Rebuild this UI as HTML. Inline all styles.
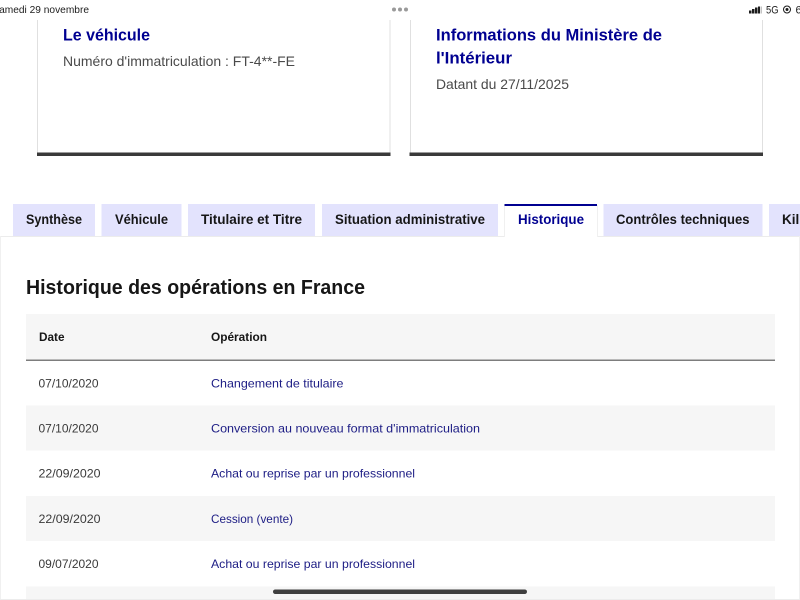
<!DOCTYPE html>
<html lang="fr">
<head>
<meta charset="utf-8">
<title>Historique</title>
<style>
html,body{margin:0;padding:0;background:#fff;width:800px;height:600px;overflow:hidden}
svg{display:block;position:absolute;left:0;top:0}
text{font-family:"Liberation Sans",sans-serif}
.b{font-weight:bold}
.h{fill:#000091;font-size:17px;font-weight:bold}
.p{fill:#4a4a4a;font-size:14px}
.t{fill:#161616;font-size:13.5px;font-weight:bold}
.d{fill:#3a3a3a;font-size:12px}
.l{fill:#1c1c84;font-size:12px}
.s{fill:#1c1c1c;font-size:10.5px}
</style>
</head>
<body>
<svg width="800" height="600" viewBox="0 0 800 600" xmlns="http://www.w3.org/2000/svg">
<rect width="800" height="600" fill="#fff"/>

<!-- status bar -->
<text class="s" x="-6" y="13" textLength="95" lengthAdjust="spacingAndGlyphs">samedi 29 novembre</text>
<circle cx="394" cy="9.5" r="2" fill="#9a9a9a"/>
<circle cx="400" cy="9.5" r="2" fill="#9a9a9a"/>
<circle cx="406" cy="9.5" r="2" fill="#9a9a9a"/>
<rect x="749" y="10.500" width="2.500" height="3" fill="#1c1c1c"/>
<rect x="752" y="9" width="2.500" height="4.500" fill="#1c1c1c"/>
<rect x="755" y="7.500" width="2.500" height="6" fill="#1c1c1c"/>
<rect x="758" y="6.500" width="2" height="7" fill="#1c1c1c"/>
<rect x="760.500" y="6.500" width="1.500" height="7" fill="#c4c4c4"/>
<text class="s" x="766" y="13.500" font-size="11" style="font-size:11px" textLength="12.500" lengthAdjust="spacingAndGlyphs">5G</text>
<circle cx="787" cy="9.500" r="3.500" fill="none" stroke="#1c1c1c" stroke-width="1"/>
<circle cx="787" cy="9.500" r="1.500" fill="#1c1c1c"/>
<text class="s" x="795.500" y="13.500" style="font-size:11px">6</text>

<!-- cards -->
<rect x="37" y="20" width="1" height="133" fill="#e0e0e0"/>
<rect x="389.500" y="20" width="1" height="133" fill="#e0e0e0"/>
<rect x="37" y="152.500" width="353.500" height="3.500" fill="#3a3a3a"/>
<text class="h" x="63" y="40.500" textLength="87" lengthAdjust="spacingAndGlyphs">Le véhicule</text>
<text class="p" x="63" y="66" textLength="232" lengthAdjust="spacingAndGlyphs">Numéro d'immatriculation : FT-4**-FE</text>

<rect x="410" y="20" width="1" height="133" fill="#e0e0e0"/>
<rect x="762" y="20" width="1" height="133" fill="#e0e0e0"/>
<rect x="409.500" y="152.500" width="353.500" height="3.500" fill="#3a3a3a"/>
<text class="h" x="436" y="40.500" textLength="226" lengthAdjust="spacingAndGlyphs">Informations du Ministère de</text>
<text class="h" x="436" y="63.500" textLength="76" lengthAdjust="spacingAndGlyphs">l'Intérieur</text>
<text class="p" x="436" y="89" textLength="133" lengthAdjust="spacingAndGlyphs">Datant du 27/11/2025</text>

<!-- tab panel border -->
<rect x="0" y="236" width="800" height="1" fill="#ececec"/>
<rect x="0" y="236" width="1" height="364" fill="#f0f0f0"/>
<rect x="799" y="236" width="1" height="364" fill="#f0f0f0"/>
<rect x="0" y="599" width="800" height="1" fill="#ececec"/>

<!-- tabs -->
<rect x="13" y="204" width="82" height="32" fill="#e3e3fd"/>
<rect x="101.500" y="204" width="80" height="32" fill="#e3e3fd"/>
<rect x="188" y="204" width="127" height="32" fill="#e3e3fd"/>
<rect x="322" y="204" width="176" height="32" fill="#e3e3fd"/>
<rect x="504.500" y="204" width="92.500" height="33" fill="#fff"/>
<rect x="504" y="205" width="1" height="32" fill="#f0f0f0"/>
<rect x="597" y="205" width="1" height="32" fill="#f0f0f0"/>
<rect x="504.500" y="204" width="92.500" height="2" fill="#000091"/>
<rect x="603.500" y="204" width="159" height="32" fill="#e3e3fd"/>
<rect x="769" y="204" width="31" height="32" fill="#e3e3fd"/>

<text class="t" x="26" y="224" textLength="56" lengthAdjust="spacingAndGlyphs">Synthèse</text>
<text class="t" x="115" y="224" textLength="53" lengthAdjust="spacingAndGlyphs">Véhicule</text>
<text class="t" x="201" y="224" textLength="101" lengthAdjust="spacingAndGlyphs">Titulaire et Titre</text>
<text class="t" x="335" y="224" textLength="150" lengthAdjust="spacingAndGlyphs">Situation administrative</text>
<text class="t" x="518" y="224" textLength="66" lengthAdjust="spacingAndGlyphs" style="fill:#000091">Historique</text>
<text class="t" x="616" y="224" textLength="133.500" lengthAdjust="spacingAndGlyphs">Contrôles techniques</text>
<text class="t" x="782" y="224">Kil</text>

<!-- heading -->
<text class="b" x="26" y="294" font-size="20.500" fill="#161616" textLength="339" lengthAdjust="spacingAndGlyphs">Historique des opérations en France</text>

<!-- table -->
<rect x="26" y="314" width="749" height="46" fill="#f6f6f6"/>
<rect x="26" y="359.500" width="749" height="1.500" fill="#7d7d7d"/>
<text class="b" x="39" y="341" font-size="11.500" fill="#161616" textLength="25.500" lengthAdjust="spacingAndGlyphs">Date</text>
<text class="b" x="211" y="341" font-size="11.500" fill="#161616" textLength="56" lengthAdjust="spacingAndGlyphs">Opération</text>

<rect x="26" y="405.500" width="749" height="45" fill="#f6f6f6"/>
<rect x="26" y="496" width="749" height="45" fill="#f6f6f6"/>
<rect x="26" y="586.500" width="749" height="12.500" fill="#f6f6f6"/>

<text class="d" x="38.500" y="387.500" textLength="60" lengthAdjust="spacingAndGlyphs">07/10/2020</text>
<text class="l" x="211" y="387.500" textLength="132.500" lengthAdjust="spacingAndGlyphs">Changement de titulaire</text>
<text class="d" x="38.500" y="432.500" textLength="60" lengthAdjust="spacingAndGlyphs">07/10/2020</text>
<text class="l" x="211" y="432.500" textLength="269" lengthAdjust="spacingAndGlyphs">Conversion au nouveau format d'immatriculation</text>
<text class="d" x="38.500" y="477.500" textLength="62" lengthAdjust="spacingAndGlyphs">22/09/2020</text>
<text class="l" x="211" y="477.500" textLength="204" lengthAdjust="spacingAndGlyphs">Achat ou reprise par un professionnel</text>
<text class="d" x="38.500" y="523" textLength="62" lengthAdjust="spacingAndGlyphs">22/09/2020</text>
<text class="l" x="197" y="523" textLength="96" lengthAdjust="spacing" style="display:none"></text>
<text class="l" x="211" y="523" textLength="82" lengthAdjust="spacingAndGlyphs">Cession (vente)</text>
<text class="d" x="38.500" y="568" textLength="60" lengthAdjust="spacingAndGlyphs">09/07/2020</text>
<text class="l" x="211" y="568" textLength="204" lengthAdjust="spacingAndGlyphs">Achat ou reprise par un professionnel</text>

<!-- home indicator -->
<rect x="273" y="589.500" width="254" height="4.500" rx="2.250" fill="#3f3f3f"/>
</svg>
</body>
</html>
